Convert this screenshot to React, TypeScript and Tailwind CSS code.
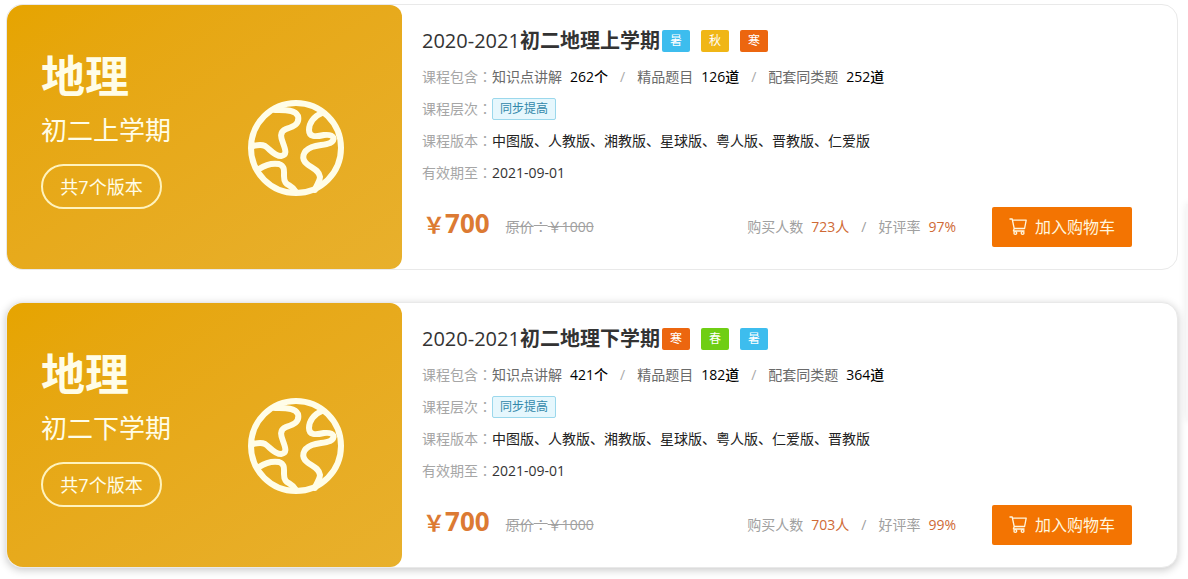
type Season = '暑' | '秋' | '寒' | '春';

type Course = {
  term: string;
  seasons: Season[];
  points: number;
  questions: number;
  similar: number;
  versions: string[];
  buyers: number;
  rating: number;
  active?: boolean;
};

const courses: Course[] = [
  {
    term: '上学期',
    seasons: ['暑', '秋', '寒'],
    points: 262,
    questions: 126,
    similar: 252,
    versions: ['中图版', '人教版', '湘教版', '星球版', '粤人版', '晋教版', '仁爱版'],
    buyers: 723,
    rating: 97,
  },
  {
    term: '下学期',
    seasons: ['寒', '春', '暑'],
    points: 421,
    questions: 182,
    similar: 364,
    versions: ['中图版', '人教版', '湘教版', '星球版', '粤人版', '仁爱版', '晋教版'],
    buyers: 703,
    rating: 99,
    active: true,
  },
];

const seasonColors: Record<Season, string> = {
  暑: 'bg-[#3dbdee]',
  秋: 'bg-[#f0b616]',
  寒: 'bg-[#ec660f]',
  春: 'bg-[#6fce14]',
};

function GlobeIcon() {
  return (
    <svg
      viewBox="0 0 96 96"
      className="mt-[95px] size-24"
      fill="none"
      stroke="currentColor"
      strokeWidth="6"
      strokeLinecap="round"
      strokeLinejoin="round"
      aria-hidden="true"
    >
      <circle cx="48" cy="48" r="45" />
      <path d="M27 10C35 10 47 9 50 16C52 25 44 27 38 29C31 32 33 38 35 43C38 51 39 55 33 56C26 56 22 49 17 46C13 44 9 45 5 46" />
      <path d="M11 69C17 65 25 63 31 64C37 66 36 71 36 76C36 87 43 83 48 92" />
      <path d="M74 13C66 16 61 23 61 30C61 37 67 37 76 35C87 34 88 40 82 43C77 45 70 45 64 47C54 51 53 59 59 64C64 68 71 70 72 77C72 82 68 85 67 90" />
    </svg>
  );
}

function CartIcon() {
  return (
    <svg
      viewBox="0 0 18 18"
      className="size-[18px]"
      fill="none"
      stroke="currentColor"
      strokeWidth="1.3"
      strokeLinejoin="round"
      aria-hidden="true"
    >
      <path d="M0.5 1H3.2L5.2 10.5H15.6L17.2 2.2H3.4M5.2 10.5L4.4 13H15.5" />
      <circle cx="6.3" cy="15" r="1.4" />
      <circle cx="13.6" cy="15" r="1.4" />
    </svg>
  );
}

function Colon() {
  return <span className="font-['Noto_Sans_CJK_TC',sans-serif] leading-none">：</span>;
}

function Label({ text }: { text: string }) {
  return (
    <dt className="text-[#a6a6a6]">
      {text}
      <Colon />
    </dt>
  );
}

function Stat({ name, value }: { name: string; value: string }) {
  return (
    <span className="flex gap-2">
      <span className="text-[#6a6a6a]">{name}</span>
      <span className="font-medium text-black">{value}</span>
    </span>
  );
}

function CourseCard({ course }: { course: Course }) {
  return (
    <article
      className={`flex rounded-2xl border border-[#e9e9e9] bg-white ${
        course.active ? 'shadow-[0_2px_8px_rgba(0,0,0,0.22)]' : ''
      }`}
    >
      <div className="flex w-[395px] shrink-0 items-start justify-between rounded-l-2xl rounded-r-xl bg-linear-to-br from-[#e6a400] to-[#e8b02c] pr-[58px] pl-[34px] text-[#fffde8]">
        <div className="pt-[41px]">
          <h2 className="text-[44px] leading-[60px] font-bold">地理</h2>
          <p className="text-[26px] leading-[48px]">初二{course.term}</p>
          <p className="mt-[10px] flex h-[45px] w-[121px] items-center justify-center rounded-full border-2 border-[#fff3bd] text-lg">
            共7个版本
          </p>
        </div>
        <GlobeIcon />
      </div>

      <div className="flex-1 pt-5 pr-[45px] pb-[22px] pl-5">
        <div className="flex items-center gap-[2px]">
          <h3 className="text-xl leading-8 font-bold text-[#333]">
            <span className="font-normal">2020-2021</span>初二地理{course.term}
          </h3>
          <ul className="flex gap-[11px]">
            {course.seasons.map((season) => (
              <li
                key={season}
                className={`h-[22px] w-7 rounded-xs text-center text-xs leading-[22px] text-white ${seasonColors[season]}`}
              >
                {season}
              </li>
            ))}
          </ul>
        </div>

        <dl className="mt-1 text-sm leading-8">
          <div className="flex h-8">
            <Label text="课程包含" />
            <dd className="flex gap-3">
              <Stat name="知识点讲解" value={`${course.points}个`} />
              <span className="text-[#aaa]">/</span>
              <Stat name="精品题目" value={`${course.questions}道`} />
              <span className="text-[#aaa]">/</span>
              <Stat name="配套同类题" value={`${course.similar}道`} />
            </dd>
          </div>
          <div className="flex h-8">
            <Label text="课程层次" />
            <dd className="flex items-center">
              <span className="rounded-xs border border-[#9bd8ec] bg-[#e6f7fd] px-[7px] text-xs leading-5 text-[#3187aa]">
                同步提高
              </span>
            </dd>
          </div>
          <div className="flex h-8">
            <Label text="课程版本" />
            <dd className="text-[#222]">{course.versions.join('、')}</dd>
          </div>
          <div className="flex h-8">
            <Label text="有效期至" />
            <dd className="text-[#333]">2021-09-01</dd>
          </div>
        </dl>

        <div className="mt-[18px] flex h-10 items-center text-sm">
          <p className="mb-2 pl-px text-[26px] leading-8 font-bold text-[#dc7a33]">
            <span className="text-[22px] leading-none">￥</span>700
          </p>
          <del className="ml-4 text-[#a0a0a0]">
            原价
            <Colon />
            ￥1000
          </del>
          <p className="ml-auto flex gap-2 text-[#a0a0a0]">
            <span>购买人数</span>
            <span className="text-[#cf6a35]">{course.buyers}人</span>
            <span className="px-1">/</span>
            <span>好评率</span>
            <span className="text-[#cf6a35]">{course.rating}%</span>
          </p>
          <button
            type="button"
            className="ml-9 flex h-10 w-[140px] items-center justify-center gap-2 rounded-xs bg-[#f37402] text-base text-[#fff6df]"
          >
            <CartIcon />
            加入购物车
          </button>
        </div>
      </div>
    </article>
  );
}

export default function App() {
  return (
    <main className="relative flex flex-col gap-8 overflow-hidden bg-white pt-1 pr-[10px] pb-3 pl-[6px] font-['Open_Sans','Noto_Sans_CJK_SC',sans-serif]">
      {courses.map((course) => (
        <CourseCard key={course.term} course={course} />
      ))}
      {/* edge of the floating side bar */}
      <div className="absolute top-[204px] -right-9 h-[216px] w-[38px] bg-[#f7f7f7] shadow-[0_0_8px_rgba(0,0,0,0.08)]" />
    </main>
  );
}
